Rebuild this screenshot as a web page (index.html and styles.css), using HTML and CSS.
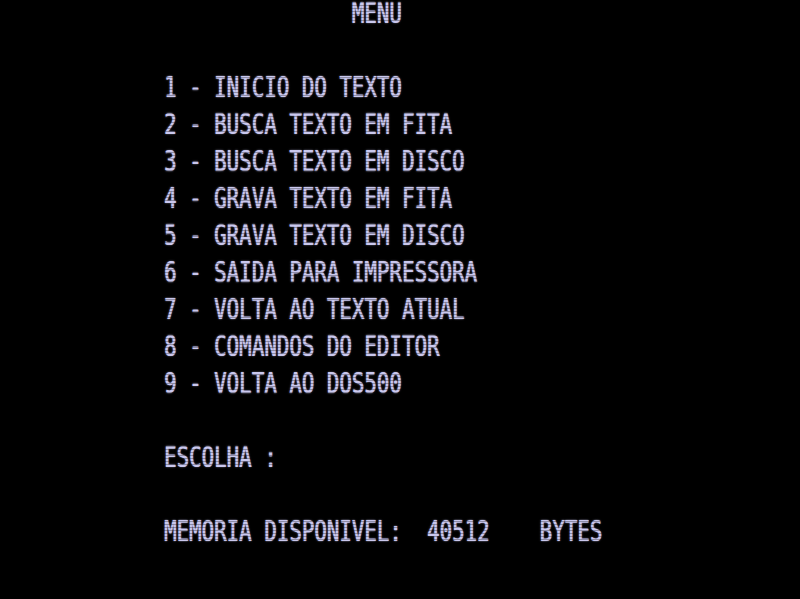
FILE: index.html
```html
<!DOCTYPE html>
<html lang="pt">
<head>
<meta charset="utf-8">
<title>MENU</title>
<link rel="stylesheet" href="styles.css">
</head>
<body>
<div class="screen">
  <div class="row"><span class="txt title">MENU</span></div>
  <div class="row"></div>
  <div class="row"><span class="txt">1 - INICIO DO TEXTO</span></div>
  <div class="row"><span class="txt">2 - BUSCA TEXTO EM FITA</span></div>
  <div class="row"><span class="txt">3 - BUSCA TEXTO EM DISCO</span></div>
  <div class="row"><span class="txt">4 - GRAVA TEXTO EM FITA</span></div>
  <div class="row"><span class="txt">5 - GRAVA TEXTO EM DISCO</span></div>
  <div class="row"><span class="txt">6 - SAIDA PARA IMPRESSORA</span></div>
  <div class="row"><span class="txt">7 - VOLTA AO TEXTO ATUAL</span></div>
  <div class="row"><span class="txt">8 - COMANDOS DO EDITOR</span></div>
  <div class="row"><span class="txt">9 - VOLTA AO DOS500</span></div>
  <div class="row"></div>
  <div class="row"><span class="txt">ESCOLHA :</span></div>
  <div class="row"></div>
  <div class="row"><span class="txt">MEMORIA DISPONIVEL:  40512    BYTES</span></div>
</div>
<div class="scanlines"></div>
</body>
</html>
```
FILE: styles.css
```css
html, body {
  margin: 0;
  padding: 0;
  background: #000;
  width: 800px;
  height: 599px;
  overflow: hidden;
}

.screen {
  display: flex;
  flex-direction: column;
  padding-left: 164px;
  padding-top: 0;
}

.row {
  height: 37px;
}

.txt {
  display: block;
  white-space: pre;
  font-family: "DejaVu Sans Mono", monospace;
  font-size: 20.8px;
  line-height: 21px;
  color: #cac8ee;
  transform: scaleY(1.37);
  transform-origin: 0 0;
  text-shadow: 0 0 1.5px rgba(200, 198, 240, 0.9), 0.5px 0 0 rgba(200, 198, 240, 0.6);
}

.title {
  padding-left: 15ch;
}

.scanlines {
  position: absolute;
  left: 0;
  top: 0;
  width: 800px;
  height: 599px;
  pointer-events: none;
  background: repeating-linear-gradient(to bottom, rgba(0,0,0,0) 0px, rgba(0,0,0,0) 2px, rgba(0,0,0,0.3) 2px, rgba(0,0,0,0.3) 3px);
}
```
